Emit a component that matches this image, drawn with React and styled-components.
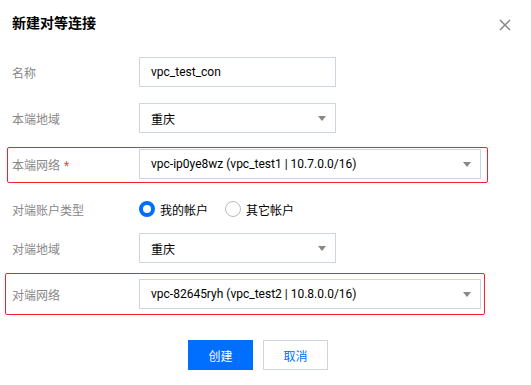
import styled, { createGlobalStyle } from 'styled-components'

const GlobalStyle = createGlobalStyle`
    body {
        margin: 0;
        background: #fff;
        font-family: Roboto, "Noto Sans CJK SC", "Liberation Sans", sans-serif;
        font-size: 12px;
        color: #000;
    }
`
const Dialog = styled.div`
    position: relative;
    width: 531px;
    height: 385px;
    box-sizing: border-box;
    padding: 12px 0 0 12px;
`
const Header = styled.div`
    display: flex;
    align-items: center;
    justify-content: space-between;
    height: 20px;
    padding-right: 20px;
`
const Title = styled.h3`
    margin: 0;
    font-size: 14px;
    font-weight: 700;
    color: #000;
`
const CloseBtn = styled.button`
    border: 0;
    padding: 0;
    background: none;
    width: 12px;
    height: 12px;
    display: flex;
    margin-top: 5px;
`
const Form = styled.div`
    margin-top: 25px;
    width: 469px;
`
const Highlight = styled.div`
    border: 1px solid #f5222d;
    border-radius: 2px;
    margin: ${({ t, r, b, l }) => `${16 - t}px ${-r}px ${-b}px ${-l}px`};
    padding: ${({ t, r, b, l }) => `${t - 1}px ${r - 1}px ${b - 1}px ${l - 1}px`};
`
const Row = styled.div`
    display: flex;
    align-items: center;
    height: ${({ h }) => h || 30}px;
    margin-top: ${({ mt }) => mt ?? 16}px;
`
const Label = styled.div`
    width: 127px;
    flex-shrink: 0;
    color: #888;
`
const Star = styled.span`
    color: #e54545;
    margin-left: 4px;
`
const Field = styled.div`
    box-sizing: border-box;
    display: flex;
    align-items: center;
    justify-content: space-between;
    width: ${({ wide }) => (wide ? 342 : 197)}px;
    height: 30px;
    padding: 0 9px 0 11px;
    border: 1px solid #cfd5de;
    background: #fff;
    color: #000;
`
const Caret = styled.span`
    width: 0;
    height: 0;
    border-left: 4px solid transparent;
    border-right: 4px solid transparent;
    border-top: 5px solid #888;
`
const RadioGroup = styled.div`
    display: flex;
    align-items: center;
    gap: 17px;
`
const RadioItem = styled.label`
    display: flex;
    align-items: center;
    gap: 5px;
    color: #000;
`
const RadioDot = styled.span`
    box-sizing: border-box;
    width: 16px;
    height: 16px;
    border-radius: 50%;
    border: ${({ checked }) => (checked ? '4px solid #006eff' : '1px solid #bbb')};
    background: #fff;
`
const Footer = styled.div`
    display: flex;
    gap: 10px;
    margin-top: 31px;
    padding-left: 176px;
`
const Button = styled.button`
    box-sizing: border-box;
    width: 65px;
    height: 30px;
    font-family: inherit;
    font-size: 12px;
    border: 1px solid ${({ primary }) => (primary ? '#006eff' : '#cfd5de')};
    background: ${({ primary }) => (primary ? '#006eff' : '#fff')};
    color: ${({ primary }) => (primary ? '#fff' : '#006eff')};
    padding: 0;
`

function Select({ value, wide }) {
    return (
        <Field wide={wide}>
            <span>{value}</span>
            <Caret />
        </Field>
    )
}

export default function App() {
    return (
        <>
            <GlobalStyle />
            <Dialog>
                <Header>
                    <Title>新建对等连接</Title>
                    <CloseBtn aria-label="close">
                        <svg width="12" height="12" viewBox="0 0 12 12">
                            <path d="M1 1 L11 11 M11 1 L1 11" stroke="#888" strokeWidth="1.5" />
                        </svg>
                    </CloseBtn>
                </Header>
                <Form>
                    <Row mt={0}>
                        <Label>名称</Label>
                        <Field>vpc_test_con</Field>
                    </Row>
                    <Row>
                        <Label>本端地域</Label>
                        <Select value="重庆" />
                    </Row>
                    <Highlight t={2} r={7} b={4} l={5}>
                        <Row mt={0}>
                            <Label>本端网络<Star>*</Star></Label>
                            <Select wide value="vpc-ip0ye8wz (vpc_test1 | 10.7.0.0/16)" />
                        </Row>
                    </Highlight>
                    <Row h={16} mt={22}>
                        <Label>对端账户类型</Label>
                        <RadioGroup>
                            <RadioItem><RadioDot checked />我的帐户</RadioItem>
                            <RadioItem><RadioDot />其它帐户</RadioItem>
                        </RadioGroup>
                    </Row>
                    <Row>
                        <Label>对端地域</Label>
                        <Select value="重庆" />
                    </Row>
                    <Highlight t={6} r={4} b={6} l={7}>
                        <Row mt={0}>
                            <Label>对端网络</Label>
                            <Select wide value="vpc-82645ryh (vpc_test2 | 10.8.0.0/16)" />
                        </Row>
                    </Highlight>
                </Form>
                <Footer>
                    <Button primary>创建</Button>
                    <Button>取消</Button>
                </Footer>
            </Dialog>
        </>
    )
}
